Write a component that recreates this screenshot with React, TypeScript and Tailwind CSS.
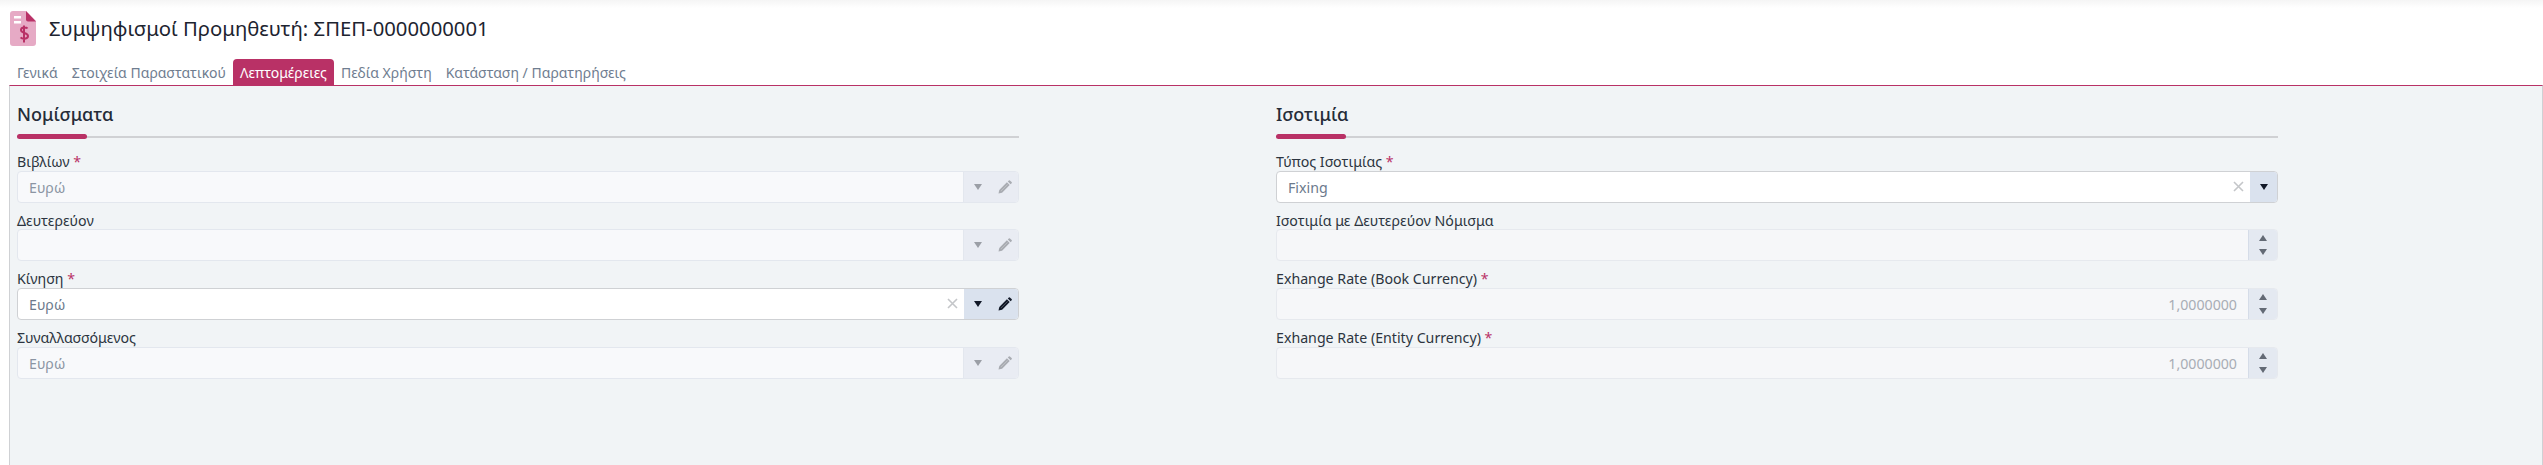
import React from "react";

const tabs = ["Γενικά", "Στοιχεία Παραστατικού", "Λεπτομέρειες", "Πεδία Χρήστη", "Κατάσταση / Παρατηρήσεις"];

function FileIcon() {
  return (
    <svg width="26" height="35" viewBox="0 0 26 35" className="shrink-0">
      <path d="M3 0H16L26 10V32a3 3 0 0 1-3 3H3a3 3 0 0 1-3-3V3a3 3 0 0 1 3-3z" fill="#e6aac5" />
      <path d="M16 0L26 10.5H18a2 2 0 0 1-2-2z" fill="#b93166" />
      <rect x="4" y="5" width="7" height="2.5" fill="#fff" />
      <rect x="4" y="10" width="7" height="2.5" fill="#fff" />
      <path d="M17.5 17.5c-1-1.4-6.5-1.8-6.5 1.6 0 3.6 7 2.2 7 6 0 3.4-6 3-7.4 1.2M14 14.5v17" fill="none" stroke="#b93166" strokeWidth="2" />
    </svg>
  );
}

function Caret({ color }: { color: string }) {
  return (
    <svg width="8" height="6" viewBox="0 0 8 6">
      <path d="M0 0h8L4 6z" fill={color} />
    </svg>
  );
}

function Pencil({ color }: { color: string }) {
  return (
    <svg width="14" height="14" viewBox="0 0 14 14">
      <path d="M0.5 13.5l0.8-3.6 7.6-7.6 2.8 2.8-7.6 7.6z" fill={color} />
      <path d="M9.8 1.4l1-1a0.8 0.8 0 0 1 1.1 0l1.7 1.7a0.8 0.8 0 0 1 0 1.1l-1 1z" fill={color} />
      <path d="M3 11l6.6-6.6" stroke="#fff" strokeOpacity="0.3" strokeWidth="0.8" />
    </svg>
  );
}

function Cross() {
  return (
    <svg width="11" height="11" viewBox="0 0 11 11" className="shrink-0">
      <path d="M1 1l9 9M10 1l-9 9" stroke="#c4c6c9" strokeWidth="1.6" />
    </svg>
  );
}

function Label({ text, required }: { text: string; required?: boolean }) {
  return (
    <div className="h-[26.67px] pt-[8px] text-[14.2px] leading-[20px] text-[#2c3440]">
      {text}
      {required && <span className="text-[#b93166]"> *</span>}
    </div>
  );
}

function LookupField({ label, value, required, active, pencil = true }: { label: string; value?: string; required?: boolean; active?: boolean; pencil?: boolean }) {
  return (
    <div>
      <Label text={label} required={required} />
      {active ? (
        <div className="flex h-[32px] overflow-hidden rounded-[4px] border border-[#cfd1d4] bg-white">
          <div className="flex-1 pl-[11px] text-[14.2px] leading-[31px] text-[#6c7a8c]">{value}</div>
          <div className="flex w-[24px] items-center justify-center">
            <Cross />
          </div>
          <div className={`flex items-center bg-[#dae2ee] ${pencil ? "w-[54px]" : "w-[27px]"}`}>
            <div className="flex w-[27px] justify-center">
              <Caret color="#111827" />
            </div>
            {pencil && (
              <div className="flex w-[27px] justify-center">
                <Pencil color="#111827" />
              </div>
            )}
          </div>
        </div>
      ) : (
        <div className="flex h-[32px] overflow-hidden rounded-[4px] border border-[#e3e7ee] bg-[#f8f9fb]">
          <div className="flex-1 pl-[11px] text-[14.2px] leading-[31px] text-[#8b95a3]">{value}</div>
          <div className="flex w-[55px] items-center border-l border-[#e3e7ee] bg-[#e9ecf3]">
            <div className="flex w-[27px] justify-center">
              <Caret color="#9b9fa6" />
            </div>
            <div className="flex w-[27px] justify-center">
              <Pencil color="#a9acb2" />
            </div>
          </div>
        </div>
      )}
    </div>
  );
}

function NumberField({ label, value, required }: { label: string; value?: string; required?: boolean }) {
  return (
    <div>
      <Label text={label} required={required} />
      <div className="flex h-[32px] overflow-hidden rounded-[4px] border border-[#e6e9ee] bg-[#f6f7f9]">
        <div className="flex-1 pr-[11px] text-right text-[14.2px] leading-[31px] text-[#a8adb5]">{value}</div>
        <div className="flex w-[29px] flex-col items-center justify-center gap-[8px] border-l border-[#d5dce8] bg-[#e4e9f1]">
          <svg width="8" height="6" viewBox="0 0 8 6">
            <path d="M0 6h8L4 0z" fill="#636a75" />
          </svg>
          <Caret color="#636a75" />
        </div>
      </div>
    </div>
  );
}

function Section({ title, children }: { title: string; children: React.ReactNode }) {
  return (
    <div className="w-[1002px]">
      <div className="h-[33px] text-[18px] leading-[26px] font-medium text-[#252c38]">{title}</div>
      <div className="relative mb-[5px] h-[5px]">
        <div className="absolute top-[1.5px] right-0 left-0 h-[2px] bg-[#d0d1d4]" />
        <div className="absolute top-0 left-0 h-[5px] w-[70px] rounded-full bg-[#b93166]" />
      </div>
      {children}
    </div>
  );
}

export default function App() {
  return (
    <div className="h-[465px] overflow-hidden bg-white font-['Noto_Sans',sans-serif]">
      <div className="h-[8px] bg-gradient-to-b from-[#f5f5f5] to-white" />
      <div className="flex h-[40px] items-center gap-[13px] pl-[10px]">
        <FileIcon />
        <h1 className="text-[20.3px] leading-[28px] text-[#1d2430]">Συμψηφισμοί Προμηθευτή: ΣΠΕΠ-0000000001</h1>
      </div>
      <div className="mt-[11px] flex h-[26px] items-stretch pl-[10px]">
        {tabs.map((tab) =>
          tab === "Λεπτομέρειες" ? (
            <div key={tab} className="rounded-t-[4px] bg-[#b93166] px-[7px] text-[14px] leading-[27px] text-white">
              {tab}
            </div>
          ) : (
            <div key={tab} className="px-[7px] text-[14px] leading-[27px] text-[#6f7d90]">
              {tab}
            </div>
          ),
        )}
      </div>
      <div className="ml-[9px] h-[380px] border-t border-l border-r border-t-[#b93166] border-r-[#cfd1d4] border-l-[#cfd1d4] bg-[#f1f4f6] pt-[15px] pl-[7px]">
        <div className="flex gap-[257px]">
          <Section title="Νομίσματα">
            <div className="flex flex-col">
              <LookupField label="Βιβλίων" value="Ευρώ" required />
              <LookupField label="Δευτερεύον" />
              <LookupField label="Κίνηση" value="Ευρώ" required active />
              <LookupField label="Συναλλασσόμενος" value="Ευρώ" />
            </div>
          </Section>
          <Section title="Ισοτιμία">
            <div className="flex flex-col">
              <LookupField label="Τύπος Ισοτιμίας" value="Fixing" required active pencil={false} />
              <NumberField label="Ισοτιμία με Δευτερεύον Νόμισμα" />
              <NumberField label="Exhange Rate (Book Currency)" value="1,0000000" required />
              <NumberField label="Exhange Rate (Entity Currency)" value="1,0000000" required />
            </div>
          </Section>
        </div>
      </div>
    </div>
  );
}
